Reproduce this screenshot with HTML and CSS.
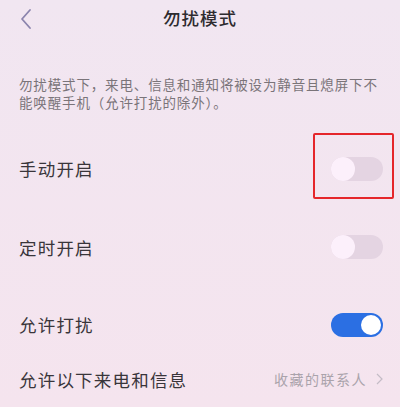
FILE: index.html
```html
<!DOCTYPE html>
<html lang="zh-CN">
<head>
<meta charset="utf-8">
<link rel="stylesheet" href="styles.css">
</head>
<body>
<div class="page">
  <header class="header">
    <svg class="back" width="14" height="22" viewBox="0 0 14 22"><path d="M11 2 L3 11 L11 20" fill="none" stroke="#8b84ad" stroke-width="1.8" stroke-linecap="round" stroke-linejoin="round"/></svg>
    <h1 class="title">勿扰模式</h1>
  </header>
  <p class="desc">勿扰模式下，来电、信息和通知将被设为静音且熄屏下不能唤醒手机（允许打扰的除外）。</p>
  <div class="row row-1">
    <span class="label">手动开启</span>
    <span class="toggle"><span class="knob"></span></span>
    <span class="highlight"></span>
  </div>
  <div class="row row-2">
    <span class="label">定时开启</span>
    <span class="toggle"><span class="knob"></span></span>
  </div>
  <div class="row row-3">
    <span class="label">允许打扰</span>
    <span class="toggle on"><span class="knob"></span></span>
  </div>
  <div class="row row-4">
    <span class="label">允许以下来电和信息</span>
    <span class="value">收藏的联系人<svg class="chev" width="7" height="12" viewBox="0 0 7 12"><path d="M1 1 L6 6 L1 11" fill="none" stroke="#c4bcc6" stroke-width="1.2"/></svg></span>
  </div>
</div>
</body>
</html>
```
FILE: styles.css
```css
html, body {
  margin: 0;
  padding: 0;
}
body {
  background: #f3e5f0;
  font-family: "Noto Sans CJK SC", "Noto Sans", sans-serif;
  color: #2f2c30;
  width: 400px;
  height: 407px;
  overflow: hidden;
}
.page {
  display: flex;
  flex-direction: column;
  background: linear-gradient(#f1e6f1, #f5e4ee);
  height: 407px;
}
.header {
  position: relative;
  height: 36px;
  display: flex;
  align-items: center;
  justify-content: center;
}
.back {
  position: absolute;
  left: 19px;
  top: 8px;
}
.title {
  margin: 0;
  font-size: 17.5px;
  font-weight: 500;
  letter-spacing: 1px;
  color: #2e2b2f;
}
.desc {
  margin: 39px 18px 0 19px;
  font-size: 13.5px;
  line-height: 18px;
  letter-spacing: 0.85px;
  color: #7a7479;
}
.row {
  position: relative;
  height: 56px;
  display: flex;
  align-items: center;
  justify-content: space-between;
  padding: 0 17px 0 19px;
}
.row-1 { margin-top: 30px; }
.row-2 { margin-top: 23px; }
.row-3 { margin-top: 22px; }
.row-4 { margin-top: -1px; }
.label {
  font-size: 17.5px;
  letter-spacing: 1.2px;
  color: #39353a;
}
.toggle {
  position: relative;
  width: 52px;
  height: 24px;
  border-radius: 12px;
  background: #e4d4e2;
}
.toggle .knob {
  position: absolute;
  left: 0;
  top: 0;
  width: 24px;
  height: 24px;
  border-radius: 50%;
  background: #fcf0fb;
}
.toggle.on {
  background: #2b6fe3;
}
.toggle.on .knob {
  left: auto;
  right: 2px;
  top: 2px;
  width: 20px;
  height: 20px;
  background: #ffffff;
}
.value {
  display: flex;
  align-items: center;
  gap: 9px;
  font-size: 14px;
  letter-spacing: 1.5px;
  color: #aaa3ab;
}
.highlight {
  position: absolute;
  left: 313px;
  top: -8px;
  width: 77px;
  height: 62px;
  border: 2px solid #e5262b;
  border-radius: 2px;
}
```
